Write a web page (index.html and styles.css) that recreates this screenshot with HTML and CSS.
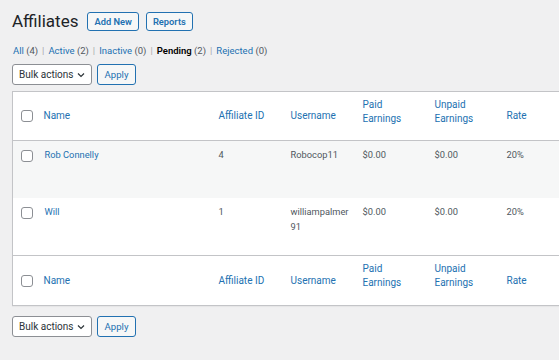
FILE: index.html
```html
<!DOCTYPE html>
<html lang="en">
<head>
  <meta charset="UTF-8" />
  <meta name="viewport" content="width=device-width, initial-scale=1.0"/>
  <title>Affiliates</title>
  <link rel="stylesheet" href="styles.css">
</head>
<body>
  <div class="wrap">
    <div class="title-row">
      <h1>Affiliates</h1>
      <a class="title-action" href="#">Add New</a>
      <a class="title-action" href="#">Reports</a>
    </div>

    <ul class="subsubsub">
      <li><a href="#">All</a> <span class="count">(4)</span></li>
      <li class="sep">|</li>
      <li><a href="#">Active</a> <span class="count">(2)</span></li>
      <li class="sep">|</li>
      <li><a href="#">Inactive</a> <span class="count">(0)</span></li>
      <li class="sep">|</li>
      <li><a class="current" href="#">Pending</a> <span class="count">(2)</span></li>
      <li class="sep">|</li>
      <li><a href="#">Rejected</a> <span class="count">(0)</span></li>
    </ul>

    <div class="tablenav">
      <div class="select">Bulk actions
        <svg width="8" height="6" viewBox="0 0 8 6"><path d="M1 1.5l3 3 3-3" fill="none" stroke="#2c3338" stroke-width="1.2"/></svg>
      </div>
      <button class="btn">Apply</button>
    </div>

    <table class="list-table">
      <colgroup>
        <col class="col-cb">
        <col class="col-name">
        <col class="col-num">
        <col class="col-num">
        <col class="col-num">
        <col class="col-num">
        <col class="col-rate">
      </colgroup>
      <thead>
        <tr>
          <th class="cb"><span class="checkbox"></span></th>
          <th><a href="#">Name</a></th>
          <th><a href="#">Affiliate ID</a></th>
          <th><a href="#">Username</a></th>
          <th class="two"><a href="#">Paid Earnings</a></th>
          <th class="two"><a href="#">Unpaid Earnings</a></th>
          <th><a href="#">Rate</a></th>
        </tr>
      </thead>
      <tbody>
        <tr class="alt">
          <td class="cb"><span class="checkbox"></span></td>
          <td class="name"><a href="#">Rob Connelly</a></td>
          <td>4</td>
          <td>Robocop11</td>
          <td>$0.00</td>
          <td>$0.00</td>
          <td>20%</td>
        </tr>
        <tr>
          <td class="cb"><span class="checkbox"></span></td>
          <td class="name"><a href="#">Will</a></td>
          <td>1</td>
          <td>williampalmer91</td>
          <td>$0.00</td>
          <td>$0.00</td>
          <td>20%</td>
        </tr>
      </tbody>
      <tfoot>
        <tr>
          <th class="cb"><span class="checkbox"></span></th>
          <th><a href="#">Name</a></th>
          <th><a href="#">Affiliate ID</a></th>
          <th><a href="#">Username</a></th>
          <th class="two"><a href="#">Paid Earnings</a></th>
          <th class="two"><a href="#">Unpaid Earnings</a></th>
          <th><a href="#">Rate</a></th>
        </tr>
      </tfoot>
    </table>

    <div class="tablenav bottom">
      <div class="select">Bulk actions
        <svg width="8" height="6" viewBox="0 0 8 6"><path d="M1 1.5l3 3 3-3" fill="none" stroke="#2c3338" stroke-width="1.2"/></svg>
      </div>
      <button class="btn">Apply</button>
    </div>
  </div>
</body>
</html>
```

FILE: styles.css
```css
html, body {
  margin: 0;
  overflow: hidden;
}

body {
  font-family: Roboto, "Liberation Sans", sans-serif;
  font-size: 9.3px;
  color: #3c434a;
  background-color: #f0f0f1;
}

a {
  color: #2271b1;
  text-decoration: none;
}

.wrap {
  padding: 8px 0 0 12px;
}

.title-row {
  display: flex;
  align-items: center;
  height: 26px;
}

h1 {
  font-size: 17px;
  font-weight: 400;
  color: #1d2327;
  margin: 0 9px 0 0;
}

.title-action {
  border: 1px solid #2271b1;
  border-radius: 3px;
  background: #f6f7f7;
  font-weight: 600;
  padding: 3px 6px;
  line-height: 11px;
  margin-right: 7px;
  margin-top: 1px;
}

.subsubsub {
  list-style: none;
  margin: 10px 0 0 1px;
  padding: 0;
  display: flex;
  gap: 4px;
  line-height: 13px;
  font-size: 9.5px;
  color: #50575e;
}

.subsubsub .sep {
  color: #a7aaad;
}

.subsubsub .current {
  color: #000;
  font-weight: 600;
}

.tablenav {
  display: flex;
  gap: 5px;
  margin-top: 7px;
  height: 21px;
}

.tablenav.bottom {
  margin-top: 10px;
}

.select {
  width: 80px;
  box-sizing: border-box;
  border: 1px solid #8c8f94;
  border-radius: 3px;
  background: #fff;
  color: #2c3338;
  padding: 0 6px;
  display: flex;
  align-items: center;
  justify-content: space-between;
  font-size: 10px;
}

.btn {
  width: 39px;
  box-sizing: border-box;
  border: 1px solid #2271b1;
  border-radius: 3px;
  background: #f6f7f7;
  color: #2271b1;
  font-family: inherit;
  font-size: 9.6px;
  padding: 0;
}

.list-table {
  margin-top: 6px;
  width: 640px;
  table-layout: fixed;
  border-collapse: collapse;
  background: #fff;
  border: 1px solid #c3c4c7;
  box-shadow: 0 1px 1px rgba(0, 0, 0, 0.04);
}

.col-cb { width: 24px; }
.col-name { width: 175px; }
.col-num { width: 72px; }

.list-table th {
  box-sizing: border-box;
  text-align: left;
  font-weight: 400;
  font-size: 10px;
  line-height: 14px;
  height: 49px;
  padding: 0 7px;
  vertical-align: middle;
}

.list-table tfoot th {
  height: 50px;
}

.list-table th.two {
  padding-bottom: 9px;
}

.list-table thead tr {
  border-bottom: 1px solid #c3c4c7;
}

.list-table tfoot tr {
  border-top: 1px solid #c3c4c7;
}

.list-table td {
  height: 57.5px;
  box-sizing: border-box;
  padding: 6px 5px 0 7px;
  vertical-align: top;
  line-height: 15px;
  color: #50575e;
  overflow-wrap: anywhere;
}

.list-table td.name {
  padding-left: 8px;
}

.list-table tr.alt {
  background: #f6f7f7;
}

.list-table .cb {
  padding: 0 0 0 8px;
}

.list-table td.cb {
  padding-top: 9px;
}

.checkbox {
  display: block;
  width: 12px;
  height: 12px;
  box-sizing: border-box;
  border: 1px solid #8c8f94;
  border-radius: 3px;
  background: #fff;
}
```
